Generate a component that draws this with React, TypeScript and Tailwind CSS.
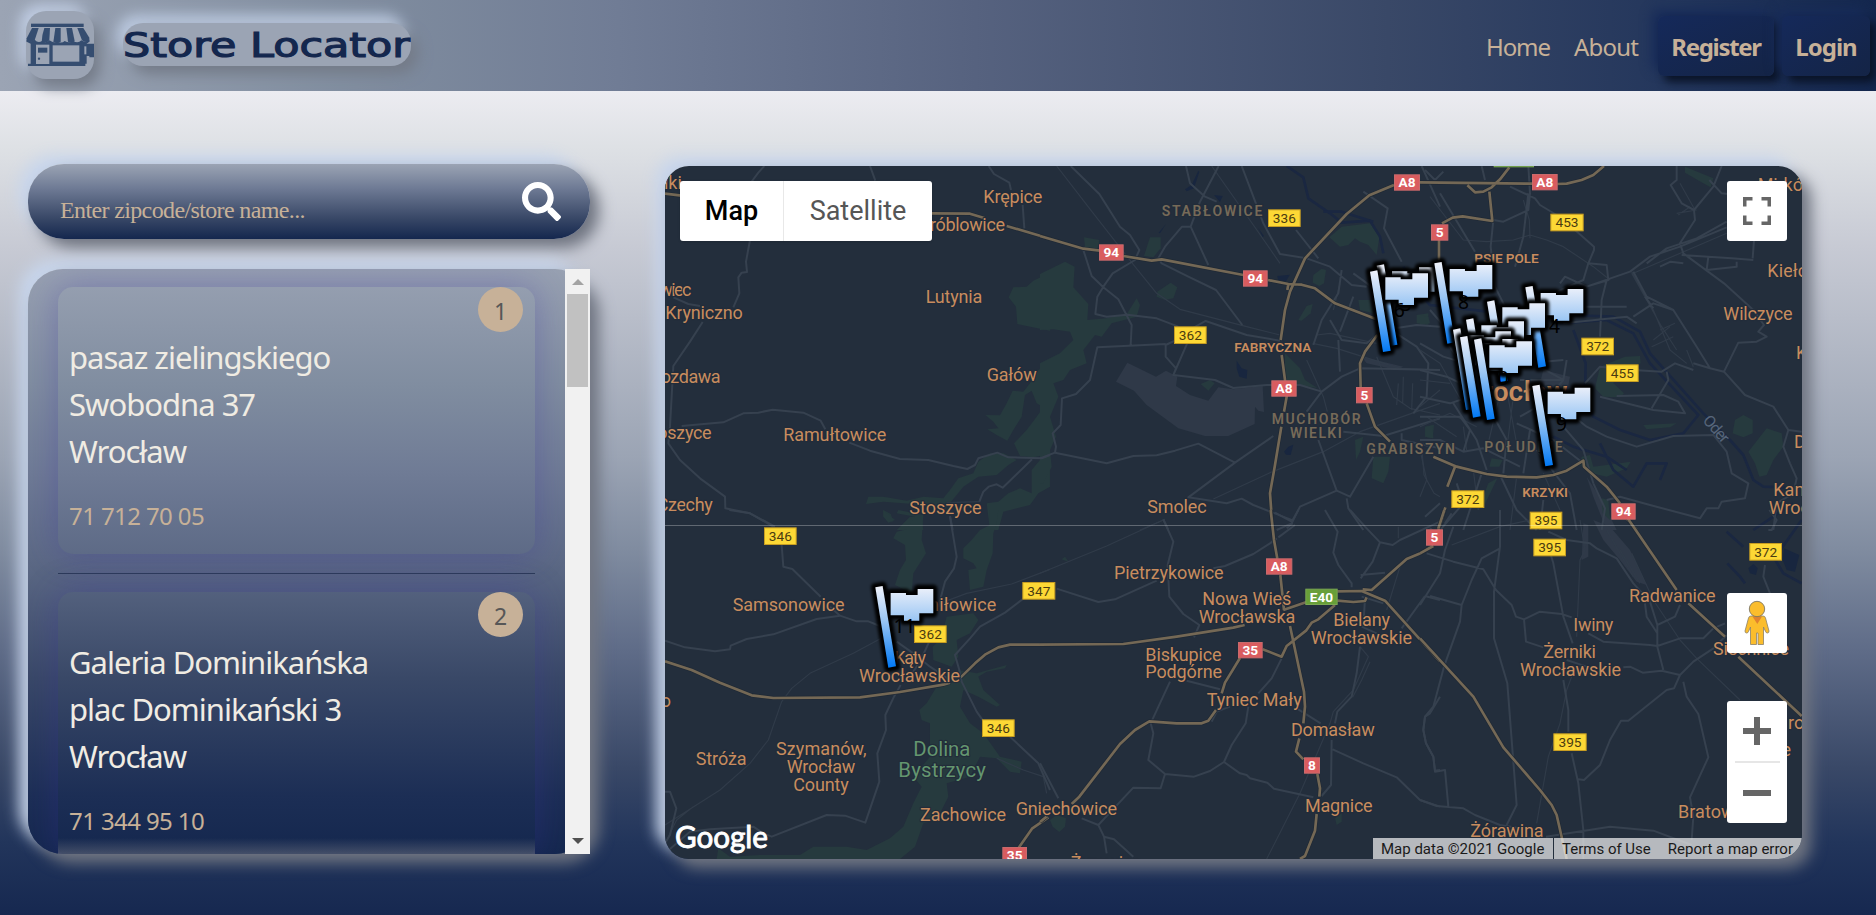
import React from "react";
import { FaSearch } from "react-icons/fa";

type Label = { t: string; x: number; y: number; w?: number; k?: "area" | "district" | "park" | "city" };
type Shield = { t: string; x: number; y: number; w: number; k: "y" | "r" | "g" };
type Tile = {
  x: number;
  y: number;
  woods: string[];
  water: string[];
  built: string[];
  thin: string[];
  minor: string[];
  major: string[];
  labels: Label[];
  shields: Shield[];
};

/* Tile content is drawn at three units per pixel. */
const tiles: Tile[] = [
  {
    x: 650,
    y: 150,
    woods: [
      "M1200 368L1150 392L1130 410L1090 412L1076 442L1098 470L1102 522L1130 528L1200 542Z",
      "M1200 640L1165 660L1140 700L1120 725L1088 722L1070 760L1050 796L1006 795L1030 815L1045 835L1012 838L1040 855L1072 872L1090 840L1115 800L1125 735L1145 722L1160 760L1180 772L1160 800L1130 840L1092 880L1110 918L1150 922L1200 912Z",
      "M1060 910L1020 910L985 935L970 970L925 985L900 1020L880 1045L820 1040L770 1052L700 1040L655 1040L648 1062L700 1055L790 1062L830 1070L885 1078L940 1010L985 980L1040 975L1075 945L1100 930Z",
      "M1170 930L1145 960L1145 1030L1110 1015L1075 1030L1045 1055L1010 1060L1020 1140L1045 1140L1060 1085L1140 1065L1165 1030L1200 1010L1200 920Z",
      "M700 1080L722 1092L730 1115L712 1112L700 1098Z",
      "M780 1100L815 1100L820 1140L740 1140Z",
    ],
    water: [],
    built: [],
    thin: ["M890 1058L990 1055"],
    minor: [
      "M343 48L325 68L304 96M300 270L288 335L291 366L275 368L265 382L268 430L250 472M158 516L120 575L70 648L60 830L55 880L90 930L150 985L225 1040L226 1075L300 1090L370 1130M70 442L115 462L150 468",
      "M95 828L220 817L280 790L325 788L368 779L460 788L512 812L526 838M598 878L660 902L750 927L835 930L910 948L952 957L975 945L985 925L1042 908L1075 922L1175 925L1200 915M1146 928L1058 1013L1040 1003L1016 1010L1000 1025L988 1055M900 1098L908 1140",
      "M660 48L676 92M1016 48L1032 72L1078 98L1083 120M1118 165L1123 235",
    ],
    major: ["M45 131L95 137M845 190L960 191L1005 205M1070 228L1200 266"],
    labels: [
      { t: "iki", x: 42, y: 118 },
      { t: "Krępice", x: 1000, y: 158, w: 177 },
      { t: "róblowice", x: 840, y: 244, w: 225 },
      { t: "wiec", x: 28, y: 437, w: 96 },
      { t: "Kryniczno", x: 46, y: 506, w: 232 },
      { t: "ozdawa", x: 32, y: 700, w: 180 },
      { t: "oszyce", x: 22, y: 867, w: 163 },
      { t: "Lutynia", x: 827, y: 458, w: 170 },
      { t: "Gałów", x: 1010, y: 692, w: 150 },
      { t: "Ramułtowice", x: 400, y: 874, w: 309 },
      { t: "Czechy", x: 20, y: 1082, w: 168 },
      { t: "Stoszyce", x: 778, y: 1092, w: 217 },
    ],
    shields: [],
  },
  {
    x: 1040,
    y: 150,
    woods: [
      "M0 372L75 335L104 350L100 412L145 462L142 510L200 505L262 490L290 445L300 465L290 500L215 520L185 560L165 555L130 600L140 640L90 660L70 690L40 700L55 740L30 800L48 860L30 900L35 950L10 1000L0 1000L0 640L60 610L100 570L90 545L40 538L0 540Z",
      "M132 262L178 270L172 300L135 292Z",
      "M330 262L362 262L362 295L340 322L312 318Z",
      "M352 425L392 398L412 412L400 445L375 450L350 440Z",
      "M868 262L905 230L990 220L1018 262L1010 315L985 285L960 275L945 265L925 285L900 290Z",
      "M820 375L845 356L858 360L852 400L838 408L818 398Z",
      "M735 610L780 655L795 690L832 714L770 705L735 690Z",
      "M482 702L510 690L524 700L505 722Z",
      "M945 870L970 860L960 905L948 930Z",
      "M1000 920L1050 920L1045 965L1030 1000L995 985Z",
      "M1155 830L1182 825L1178 865L1155 860Z",
      "M775 510L800 468L818 462L812 490L785 512Z",
      "M955 450L990 450L1000 490L960 480Z",
      "M1130 495L1165 490L1165 525L1130 520Z",
    ],
    water: [
      "M590 632L605 655L622 660L620 686L598 680L590 655Z",
      "M435 118L455 105L475 62L478 66L462 115L440 124Z",
      "M522 135L548 138L540 156Z",
      "M378 222L356 248L360 250Z",
      "M732 905L745 890L760 884L752 915L738 914Z",
      "M712 378L750 374L735 398L715 395Z",
      "M655 235L672 258L668 262Z",
    ],
    built: [
      "M262 638L348 680L378 662L412 680L408 708L450 735L505 752L535 712L580 718L668 708L672 786L655 782L645 770L644 822L565 858L495 858L415 835L368 800L320 765L282 722L228 695Z",
      "M965 620L1090 650L1070 660L980 640Z",
    ],
    thin: [
      "M50 48L160 190L285 350L350 430L420 478L620 530L720 555",
      "M515 48L640 225L720 340",
      "M520 1047L690 968L850 905L960 845L1200 760M300 1140L375 1108",
      "M818 580L890 595L1080 655L1200 660M830 555L870 550L1010 580M800 630L850 740L862 785",
      "M880 480L900 400M1075 700L1070 765M1090 680L1088 760M1118 700L1115 780",
      "M1145 890L1152 975L1182 1030L1200 1040",
      "M1010 620L1060 740L1110 775L1200 795",
    ],
    minor: [
      "M92 48L178 132L240 230L270 255L298 300L285 330L218 370L190 410L172 440L166 492L200 500L262 494L350 505L415 530",
      "M130 300L155 378L190 412L235 448L275 525L272 585M377 582L172 592L150 690L108 732L66 745L62 825L38 850L48 890L45 908L0 925",
      "M45 908L200 940L280 918L350 916L405 902L475 881L585 938L445 1042L560 1060L605 1046L640 1065L760 1112",
      "M445 542L497 513L620 555L720 572M452 556L400 675L525 690L580 714L680 705L780 705L845 725L800 785M400 675L408 655L377 620L377 585L430 560",
      "M438 48L450 100L495 140L530 155M536 48L480 155L452 230L426 230L375 290L355 325L365 340L445 380L528 420L607 525M452 230L505 345",
      "M605 48L640 140L670 220L720 312L800 325L870 350L935 405L980 410M768 240L835 325",
      "M1145 48L1200 170M970 125L1043 175L1032 235L1085 335",
      "M700 858L585 938M835 870L890 1022L930 1040L1000 920M890 1022L780 1070L755 1120L710 1140M845 725L905 680L960 655L1200 660M910 845L1030 858L1200 805M920 1045L925 1075L970 1140",
      "M905 360L895 430L845 510L820 585M940 370L995 410M940 440L900 545M870 510L905 570L980 580L1030 540L1130 525L1200 530M895 570L900 665",
      "M370 1108L385 1140M1085 850L1085 870L1200 895M1155 1100L1200 1060",
      "M1060 545L1130 590L1165 640L1160 740L1120 790",
    ],
    major: [
      "M0 258L130 296L180 302M250 318L335 332L365 328L610 375M684 390L745 402",
      "M1062 105L988 136L920 192L795 325L750 425L735 480L722 570M725 615L735 690L740 740L732 785M724 830L705 945L690 1030L698 1140",
      "M745 402L785 404L825 415L885 460L1010 508",
      "M1012 555L975 605L960 640L962 712M980 760L1005 830L1050 875",
      "M1140 97L1200 97M1197 268L1197 330M745 402L742 420",
    ],
    labels: [
      { t: "STABŁOWICE", x: 365, y: 197, w: 302, k: "area" },
      { t: "FABRYCZNA", x: 583, y: 606, w: 231, k: "district" },
      { t: "MUCHOBÓR", x: 695, y: 823, w: 267, k: "area" },
      { t: "WIELKI", x: 750, y: 865, w: 155, k: "area" },
      { t: "GRABISZYN", x: 979, y: 912, w: 266, k: "area" },
      { t: "Smolec", x: 322, y: 1090, w: 178 },
    ],
    shields: [
      { t: "336", x: 684, y: 178, w: 98, k: "y" },
      { t: "94", x: 177, y: 283, w: 74, k: "r" },
      { t: "94", x: 609, y: 361, w: 74, k: "r" },
      { t: "362", x: 402, y: 529, w: 98, k: "y" },
      { t: "A8", x: 694, y: 691, w: 76, k: "r" },
      { t: "A8", x: 1062, y: 73, w: 78, k: "r" },
      { t: "5", x: 948, y: 711, w: 50, k: "r" },
    ],
  },
  {
    x: 1420,
    y: 150,
    woods: [
      "M795 50L880 85L872 112L850 100L795 68Z",
      "M945 810L970 795L998 810L998 850L970 862L938 850Z",
      "M985 905L1040 835L1085 850L1090 890L1060 930L1040 975L1018 980L1005 940Z",
      "M540 650L615 620L660 618L662 640L600 660L580 700L612 730L600 742L550 740L525 715Z",
      "M485 920L510 915L520 950L632 935L620 955L560 980L515 970L480 945Z",
      "M670 825L770 820L750 832L680 838Z",
      "M205 1000L232 985L195 1062L190 1040Z",
      "M18 830L38 825L40 865L15 860Z",
      "M0 495L25 500L30 520L0 525Z",
      "M545 1045L565 1050L570 1110L548 1090Z",
      "M215 925L248 930L238 950L208 950Z",
    ],
    water: [],
    built: ["M500 980L520 1040L560 1140L590 1140L545 1050Z", "M370 660L450 680L440 730L360 700Z"],
    thin: [
      "M30 140L130 270L200 275L280 270L330 255L380 270L430 290L520 350L570 390M310 150L328 210L330 265",
      "M635 370L725 530L770 600M635 365L700 480L750 600L800 640M700 570L750 530M695 590L760 560M720 540L765 520M800 600L820 650",
      "M770 190L830 180M775 195L810 170M780 100L825 180M640 370L920 250",
      "M0 600L60 640L140 780M0 690L90 700M0 830L90 790L170 830M20 800L110 860M60 720L0 770M240 730L200 900M260 720L290 880M280 740L260 900M130 830L140 900",
      "M0 900L20 990L0 1040M160 960L175 1080M290 980L270 1140M370 970L420 1080",
    ],
    minor: [
      "M15 60L45 90L70 65M60 130L165 305M185 48L195 90M325 48L330 130L325 180L250 215L220 210L212 290L225 410L260 480M270 110L345 145L360 165L410 195M325 130L310 260L285 350",
      "M465 240L522 290L522 300L505 340L560 345L565 390L500 410L435 380L420 400M505 340L490 390L400 430M560 390L545 450L540 560",
      "M770 48L770 90L752 105L785 160L822 180L880 110L905 48M822 180L825 210L780 280L790 310L912 400L1000 480L1032 525L1015 545L1040 560L1010 575L955 578L912 665L870 655L820 640M868 90L905 130L925 132",
      "M920 232L780 290L690 320L630 365L500 410M920 215L830 265L740 295L680 340M785 315L865 320L935 325L1000 330M865 320L860 360L950 350L950 335M1002 272L998 325M720 350L752 335L790 340",
      "M640 365L680 440L760 480L830 590L870 655L912 665L975 735L1060 770L1105 840L1145 845M675 440L700 475M640 500L700 460L760 480M1105 840L1090 890L1110 940L1130 985L1120 1030L1070 1060L1060 1140",
      "M370 470L620 470M430 520L620 500L650 520M495 700L540 650L640 660L725 665L765 640L820 660M740 665L745 690L695 775M540 740L700 780L795 790L775 755L730 735L590 738",
      "M450 790L500 830L560 860L650 890L760 858L880 855L920 905L935 970L985 1000L975 1045L905 1055L895 1075L860 1075L840 1105L690 1065L600 1040L560 1050",
      "M0 580L70 620L170 650L320 640L430 630M70 560L150 680L210 760M0 660L80 680L230 750M30 480L100 560L160 580M0 740L90 760L210 720M300 690L430 690L370 760L300 800M340 640L430 690L440 630",
      "M0 800L120 800L150 840L130 905M100 760L170 870L200 960M210 780L260 870L250 970M330 840L310 970M290 820L400 870L490 940M0 870L60 870L130 905L190 895L300 950M110 1000L130 1060L60 1140M185 970L130 1140M240 975L290 1080L350 1140M370 1050L360 1140M520 1000L555 1075L545 1140",
      "M430 830L490 900L520 1000M350 900L450 1030L470 1140",
    ],
    major: [
      "M0 97L340 101M412 102L440 101L485 90L520 75L552 48M268 52L240 88L215 112L190 125L165 127L142 106M208 125L217 213L128 199L98 203L66 220M57 270L57 325",
      "M40 920L110 950L200 972L260 980L350 982L400 975L440 962L490 932L492 950L560 1010L600 1060M622 1108L650 1140M105 950L82 1010M76 1072L68 1100L55 1140",
    ],
    labels: [
      { t: "Mirków", x: 1013, y: 123, w: 176 },
      { t: "Kiełczów", x: 1042, y: 381, w: 218 },
      { t: "Wilczyce", x: 910, y: 511, w: 208 },
      { t: "K", x: 1128, y: 626 },
      { t: "PSIE POLE", x: 163, y: 340, w: 193, k: "district" },
      { t: "Wrocław", x: 116, y: 752, w: 326, k: "city" },
      { t: "D", x: 1122, y: 893 },
      { t: "Kam", x: 1060, y: 1038 },
      { t: "Wroc", x: 1046, y: 1092 },
      { t: "KRZYKI", x: 307, y: 1041, w: 137, k: "district" },
      { t: "POŁUDNIE", x: 193, y: 907, w: 235, k: "area" },
    ],
    shields: [
      { t: "A8", x: 336, y: 72, w: 77, k: "r" },
      { t: "5", x: 33, y: 223, w: 52, k: "r" },
      { t: "453", x: 391, y: 191, w: 100, k: "y" },
      { t: "372", x: 484, y: 563, w: 98, k: "y" },
      { t: "455", x: 558, y: 643, w: 98, k: "y" },
      { t: "372", x: 94, y: 1021, w: 99, k: "y" },
      { t: "395", x: 329, y: 1085, w: 98, k: "y" },
      { t: "94", x: 574, y: 1060, w: 73, k: "r" },
      { t: "", x: 221, y: 3, w: 121, k: "g" },
    ],
  },
  {
    x: 650,
    y: 510,
    woods: [
      "M745 0L820 15L815 90L828 130L790 190L785 250L735 225L750 180L768 150L765 105L730 85L740 65L770 58L795 20L740 10Z",
      "M700 0L735 30L715 38L700 20Z",
      "M1020 0L1045 0L1040 40L1030 70L1028 130L1010 180L1000 230L960 240L955 180L980 175L970 160L940 145L940 115L965 90L990 60L1020 45Z",
      "M890 320L970 310L985 330L960 370L920 390L925 440L905 470L850 450L848 410L880 380L885 340Z",
      "M860 530L905 520L925 480L980 490L1070 465L1065 475L1010 485L985 500L1000 540L1050 585L1040 590L985 560L940 540L930 590L960 640L1000 670L1050 740L1115 755L1110 790L1080 785L1040 745L990 740L960 800L890 820L895 860L860 930L820 940L795 1010L750 1047L200 1047L205 1015L240 1040L330 1035L450 1035L490 1010L590 1010L650 1020L720 985L760 950L790 880L815 830L790 800L840 740L840 640L815 630L808 600L830 580Z",
    ],
    water: [],
    built: [],
    thin: [
      "M730 365L610 430L480 490L425 535L395 575L355 690L300 760L210 840L45 945M45 1000L80 930L130 890",
      "M870 280L950 250L1085 222L1200 178M1040 745L1120 780L1180 800L1190 850",
    ],
    minor: [
      "M238 0L300 10L375 50M395 105L400 170L427 177L512 260M45 392L105 412L195 424L240 418L242 407L290 387L370 373L500 327L570 317L620 334L655 334L690 348M540 290L570 317M740 395L790 430L840 470L900 510",
      "M900 20L920 140L912 175L885 215L865 290M1117 268L1065 308L990 350L960 385L915 435L928 480L935 515L980 605L1005 640M840 390L810 455L770 515M1080 680L1165 760L1200 840",
      "M752 525L732 560L706 615L708 660L682 730L688 815L646 938L585 917L530 915L365 980L340 970L310 950L180 958L120 965L45 1030M45 845L60 845L79 895L60 975L45 1000",
    ],
    major: [
      "M45 454L125 480L210 518L305 556L370 564L630 562L750 546L880 524L900 518M932 502L975 460L1005 434L1045 412L1080 404L1200 404",
      "M1105 1015L1146 956L1195 922",
    ],
    labels: [
      { t: "Samsonowice", x: 248, y: 303, w: 336 },
      { t: "Gniłowice", x: 800, y: 303, w: 239 },
      { t: "Kąty", x: 733, y: 462, w: 95 },
      { t: "Wrocławskie", x: 627, y: 516, w: 303 },
      { t: "o", x: 32, y: 590 },
      { t: "Stróża", x: 137, y: 764, w: 153 },
      { t: "Szymanów,", x: 378, y: 735, w: 272 },
      { t: "Wrocław", x: 410, y: 788, w: 206 },
      { t: "County", x: 430, y: 842, w: 166 },
      { t: "Dolina", x: 790, y: 738, w: 171, k: "park" },
      { t: "Bystrzycy", x: 745, y: 801, w: 263, k: "park" },
      { t: "Zachowice", x: 810, y: 932, w: 258 },
      { t: "Gniechowice", x: 1097, y: 916, w: 304 },
    ],
    shields: [
      { t: "346", x: 342, y: 52, w: 98, k: "y" },
      { t: "362", x: 792, y: 346, w: 98, k: "y" },
      { t: "347", x: 1117, y: 216, w: 99, k: "y" },
      { t: "346", x: 996, y: 628, w: 98, k: "y" },
      { t: "35", x: 1057, y: 1011, w: 74, k: "r" },
    ],
  },
  {
    x: 1040,
    y: 510,
    woods: [
      "M30 930L50 915L78 925L75 950L58 966L38 950Z",
      "M885 925L905 910L905 935L890 945Z",
      "M65 148L75 140L85 155Z",
    ],
    water: [],
    built: [],
    thin: [
      "M0 190L200 108L375 28M960 410L985 440L940 540L880 605L870 640L780 850L680 1047M1080 170L1040 300M990 455L965 510L938 562M1075 50L1075 85",
    ],
    minor: [
      "M370 28L400 95L383 165L388 260L430 312L478 345L462 382M50 236L175 276L225 268L350 212M710 85L690 100L640 132L555 168L520 175M765 45L715 82M705 8L755 35L775 0M758 40L740 55",
      "M390 515L332 640L340 670L325 750L375 792L462 800L510 783L552 756L575 705L617 640L625 590M552 756L600 790L620 795L630 805L682 818L702 836L820 862M375 792L362 835L280 833L175 945L125 925M175 945L192 980L200 1030M192 980L222 988L280 1040M0 760L55 865M440 512L540 538M655 550L695 505L725 445",
      "M855 0L893 65L880 128L895 165L935 220L935 232M930 0L975 50L1020 97L1058 105L1080 90L1200 35M1020 97L998 155L962 205M962 195L1035 188M965 260L1030 280M975 265L970 350M960 410L950 490L935 560L892 605L885 640M875 690L873 825L845 858M878 718L970 760L1070 802L1140 870L1200 890M770 595L842 640M965 350L1010 370M1170 55L1200 80M1155 258L1200 270M1155 258L1085 355M1200 560L1170 610L1155 620L1150 660L1158 700L1180 740L1185 782L1200 780",
      "M515 635L530 605L570 590",
    ],
    major: [
      "M0 404L250 402L410 380L580 353L614 345M730 300L800 276M892 244L965 243L1035 272L1200 455M892 272L940 276L975 273L980 262M968 238L995 240L1100 147L1145 128L1175 108",
      "M692 0L702 90L712 146M721 195L732 300M750 348L792 545L795 590L790 640M778 685L768 725L790 748M832 792L840 835L838 860M830 912L825 962L795 1038L780 1047",
      "M885 285L835 328L815 338L798 362L740 408L725 440L668 418M600 444L555 518L545 550M528 600L505 632L485 640L410 640L328 634L285 660L240 702L118 860L95 882M20 920L0 936",
    ],
    labels: [
      { t: "Pietrzykowice", x: 222, y: 208, w: 329 },
      { t: "Nowa Wieś", x: 487, y: 285, w: 267 },
      { t: "Wrocławska", x: 476, y: 339, w: 290 },
      { t: "Bielany", x: 880, y: 347, w: 170 },
      { t: "Wrocławskie", x: 812, y: 402, w: 304 },
      { t: "Biskupice", x: 316, y: 452, w: 229 },
      { t: "Podgórne", x: 316, y: 505, w: 230 },
      { t: "Tyniec Mały", x: 500, y: 587, w: 285 },
      { t: "Domasław", x: 753, y: 679, w: 251 },
      { t: "Magnice", x: 795, y: 906, w: 203 },
      { t: "Żurawice", x: 92, y: 1078, w: 212 },
    ],
    shields: [
      { t: "A8", x: 678, y: 145, w: 79, k: "r" },
      { t: "E40", x: 796, y: 236, w: 97, k: "g" },
      { t: "35", x: 594, y: 396, w: 74, k: "r" },
      { t: "8", x: 792, y: 742, w: 48, k: "r" },
      { t: "5", x: 1158, y: 58, w: 51, k: "r" },
    ],
  },
  {
    x: 1420,
    y: 510,
    woods: [],
    water: [
      "M985 175L1000 162L1013 175L1008 195L990 190Z",
      "M1092 115L1138 135L1125 185L1100 180L1088 150Z",
    ],
    built: ["M520 30L570 50L630 120L680 225L650 215L600 150L550 90Z", "M490 40L505 45L505 140L485 150Z"],
    thin: [
      "M635 130L700 270L780 390L830 445L960 570M95 105L240 50L330 30M480 30L495 120L480 150L470 380",
      "M455 500L440 540L420 640L385 740L350 940M600 120L660 220M560 60L640 200",
    ],
    minor: [
      "M240 0L240 110L222 245L222 385L262 520L290 885L260 945M20 130L100 155L190 178L228 240L275 285L288 320L312 328L360 305L425 312L455 322M312 328L318 395L370 412M100 50L75 120L60 190L0 285M240 115L185 145L155 210L125 285L30 258M125 285L120 335L72 470L40 590L15 620L10 660L18 700L40 740L45 785L75 780L85 890M75 40L95 10",
      "M0 870L50 888L130 895L165 915L240 945L300 955M385 65L440 90L510 100L530 115L590 145L640 220L690 275L712 345L712 410L730 480M385 110L400 160L430 320L458 400M430 510L445 600L445 665M455 730L475 820L490 960L490 1047M505 370L550 395L690 405L712 408L780 385L850 385L880 355L915 340",
      "M610 472L630 470L668 488L725 482L780 495L762 535L740 540L625 632L603 632L570 690L540 765L492 810L475 808M780 495L820 455L880 415L920 375M790 515L800 560L835 612L865 742L810 862L820 920L815 990M378 980L570 950L700 962L815 1005",
      "M675 280L680 320L712 370M712 345L765 320L780 285M1035 165L1030 200L1050 250M1048 0L1070 30L1055 60L1045 60",
      "M440 450L500 470",
    ],
    major: [
      "M73 0L55 55M40 108L0 130M0 385L160 560L250 712L360 840L395 885L410 915L440 1047",
      "M625 28L770 240M805 280L915 380M955 440L1145 618",
    ],
    labels: [
      { t: "Radwanice", x: 627, y: 275, w: 260 },
      { t: "Iwiny", x: 460, y: 364, w: 120 },
      { t: "Żerniki", x: 370, y: 443, w: 158 },
      { t: "Wrocławskie", x: 300, y: 498, w: 303 },
      { t: "Siechnice", x: 879, y: 435, w: 228 },
      { t: "ro", x: 1104, y: 657 },
      { t: "ce", x: 1060, y: 737, w: 53 },
      { t: "Bratowice", x: 774, y: 925, w: 240 },
      { t: "Żórawina", x: 151, y: 982, w: 220 },
    ],
    shields: [
      { t: "395", x: 340, y: 86, w: 98, k: "y" },
      { t: "372", x: 988, y: 99, w: 98, k: "y" },
      { t: "395", x: 400, y: 670, w: 100, k: "y" },
    ],
  },
];

const rivers = [
  "M740 48L790 82L805 145L870 190L905 218L990 212L1020 260L1030 310",
  "M850 185L905 185L1000 215M1090 350L1130 420L1170 465L1390 490L1500 520L1570 495L1720 500L1800 545L1830 610L1990 790L2070 870L2110 915L2140 990L2170 1010L2240 1012",
  "M1560 520L1700 510L1780 550L1830 640L1975 795L1930 850L1830 870L1740 840L1660 800L1635 740L1637 640L1600 540",
  "M1680 880L1720 960L1780 1010L1820 940L1880 940L1860 990M1540 860L1600 890L1700 920L1760 960M2140 1140L2260 1060",
  "M2060 1145L2110 1190M2062 1240L2100 1280L2115 1300M2200 1220L2230 1270L2285 1300M2285 1110L2200 1230",
];

const flags = [
  { x: 1376.7, y: 265, n: "3" },
  { x: 1434.3, y: 262.7, n: "8" },
  { x: 1370, y: 271, n: "6" },
  { x: 1525.3, y: 286.7, n: "4" },
  { x: 1487, y: 301, n: "" },
  { x: 1466, y: 319, n: "" },
  { x: 1453, y: 329, n: "" },
  { x: 1460, y: 336.7, n: "" },
  { x: 1474, y: 339, n: "0" },
  { x: 1532.3, y: 385.3, n: "9" },
  { x: 875.3, y: 586.7, n: "11" },
];

const POLE = "M0 2L22 -2L62 239L39 243Z";
const CLOTH = "M46 19H92V25H127V7H174V80H132V102H86V86H46Z";

function Flag({ x, y, n }: { x: number; y: number; n: string }) {
  return (
    <g transform={`translate(${x} ${y}) scale(0.33333)`}>
      <g filter="url(#haze)" fill="#000" stroke="#000" strokeWidth="25" strokeLinejoin="round">
        <path d={POLE} />
        <path d={CLOTH} />
      </g>
      <g fill="url(#flag)">
        <path d={POLE} />
        <path d={CLOTH} />
      </g>
      <text x="88" y="138" fontSize="58" textAnchor="middle" fill="#000" fontFamily="'Noto Sans',sans-serif">
        {n}
      </text>
    </g>
  );
}

const at = (t: Tile) => `translate(${t.x} ${t.y}) scale(0.33333)`;

function MapLabel({ l }: { l: Label }) {
  const size = l.k === "area" ? 42 : l.k === "district" ? 41 : l.k === "park" ? 61 : l.k === "city" ? 84 : 54;
  const fill = l.k === "area" ? "#766a58" : l.k === "park" ? "#64966f" : "#c88c5e";
  return (
    <text
      x={l.x}
      y={l.y}
      fontSize={size}
      fontWeight={l.k === "area" || l.k === "district" || l.k === "city" ? 600 : 400}
      textLength={l.w}
      fill={fill}
      stroke="#222c3a"
      strokeWidth="7"
      strokeLinejoin="round"
      paintOrder="stroke"
    >
      {l.t}
    </text>
  );
}

function RoadShield({ s }: { s: Shield }) {
  const h = s.k === "y" ? 53 : 49;
  const bg = s.k === "y" ? "#fdd835" : s.k === "r" ? "#d95c5f" : "#689f38";
  const edge = s.k === "y" ? "#c79d22" : s.k === "r" ? "#c96a6c" : "#7aa753";
  return (
    <g>
      <rect x={s.x + 1.5} y={s.y + 1.5} width={s.w - 3} height={h - 3} fill={bg} stroke={edge} strokeWidth="3" />
      <text
        x={s.x + s.w / 2}
        y={s.y + h / 2 + 14.5}
        fontSize="41"
        fontWeight={s.k === "y" ? 400 : 700}
        textAnchor="middle"
        fill={s.k === "y" ? "#4a3c10" : "#fff"}
      >
        {s.t}
      </text>
    </g>
  );
}

function MapCanvas() {
  return (
    <svg className="block h-full w-full" viewBox="665 166 1137 693" fontFamily="Roboto, sans-serif">
      <defs>
        <linearGradient id="flag" gradientUnits="userSpaceOnUse" x1="0" y1="0" x2="0" y2="243">
          <stop offset="0" stopColor="#eef1fa" />
          <stop offset="0.42" stopColor="#9ac6f4" />
          <stop offset="1" stopColor="#0078f5" />
        </linearGradient>
        <filter id="haze" x="-30%" y="-30%" width="160%" height="160%">
          <feGaussianBlur stdDeviation="5" />
        </filter>
      </defs>
      <rect x="665" y="166" width="1137" height="693" fill="#232e3c" />
      {tiles.map((t, i) => (
        <g key={i} transform={at(t)}>
          {t.built.map((d) => (
            <path key={d} d={d} fill="#2f3948" />
          ))}
          {t.woods.map((d) => (
            <path key={d} d={d} fill="#263a3e" />
          ))}
          {t.water.map((d) => (
            <path key={d} d={d} fill="#18263f" />
          ))}
        </g>
      ))}
      <g transform="translate(1040 150) scale(0.33333)" fill="none" stroke="#1a2741" strokeWidth="8" strokeLinejoin="round">
        {rivers.map((d) => (
          <path key={d} d={d} />
        ))}
      </g>
      {tiles.map((t, i) => (
        <g key={i} transform={at(t)} fill="none" strokeLinejoin="round">
          <path d={t.thin.join("")} stroke="#303b49" strokeWidth="3.5" />
          <path d={t.minor.join("")} stroke="#36414f" strokeWidth="6" />
        </g>
      ))}
      {tiles.map((t, i) => (
        <g key={i} transform={at(t)} fill="none" strokeLinejoin="round">
          <path d={t.major.join("")} stroke="#1f2935" strokeWidth="12" />
          <path d={t.major.join("")} stroke="#746855" strokeWidth="8" />
        </g>
      ))}
      {tiles.map((t, i) => (
        <g key={i} transform={at(t)}>
          {t.labels.map((l) => (
            <MapLabel key={l.t + l.y} l={l} />
          ))}
          {t.shields.map((s) => (
            <RoadShield key={s.t + s.x} s={s} />
          ))}
        </g>
      ))}
      <text transform="translate(1702 421) rotate(48)" fontSize="16" textLength="31" fill="#56657a">
        Oder
      </text>
      <path d="M665 525.5H1802" stroke="#fff" strokeOpacity="0.28" />
      {flags.map((f) => (
        <Flag key={`${f.x}`} {...f} />
      ))}
    </svg>
  );
}

function StoreIcon() {
  return (
    <svg viewBox="0 0 204 204" className="block h-[68px] w-[68px]" fill="#354d70">
      <rect x="15" y="38" width="158" height="10" />
      <path d="M18 51H38L26 88Q18 96 2 92V82Z" />
      <path d="M55 51H72L70 88Q64 98 47 94Q48 70 55 51Z" />
      <path d="M88 51H104V92Q96 99 82 94Z" />
      <path d="M121 51H138L146 90Q138 98 126 92Z" />
      <path d="M154 51H172L190 80V92Q176 96 168 88Z" />
      <path d="M2 86Q14 96 26 86Q36 98 48 90Q60 98 70 88Q84 98 94 92Q108 98 116 90Q130 98 142 90Q156 98 166 88Q178 96 190 86V92L182 98V158H178V165H6V158H14V98L2 92Z" />
      <path d="M30 101H70V159H30Z" fill="#9ba4b4" />
      <path d="M80 103H160V152H80Z" fill="#9ba4b4" />
      <path d="M36 110H64V125H36Z" />
      <circle cx="39" cy="143" r="3.5" />
      <path d="M173 98H204V139H190V135H173Z" />
      <path d="M175 106H181V130H175Z" fill="#9ba4b4" />
    </svg>
  );
}

function Pegman() {
  return (
    <svg viewBox="0 0 26 46" className="h-[46px] w-[26px]">
      <path
        d="M7 16H19Q21 16 21.500 18L25 31Q25 33 23.500 33Q22 33 21.500 31.500L19.500 27V44.500H14V33H12.500V44.500H6.500V27L4.500 31.500Q4 33 2.500 33Q1 33 1 31L4.500 18Q5 16 7 16Z"
        fill="#fbbd2c"
        stroke="#8a8069"
        strokeWidth="0.8"
      />
      <path d="M8.500 16.500H18L13.300 24Z" fill="#e0822f" />
      <circle cx="13" cy="9" r="7.700" fill="#fbbd2c" stroke="#6f6b60" strokeWidth="0.8" />
    </svg>
  );
}

function StoreCard({ n, lines, phone }: { n: number; lines: string[]; phone: string }) {
  return (
    <article className="flex h-[267px] flex-col rounded-[15px] pl-[11px] pr-3 shadow-[0_0_34px_2px_rgba(58,50,160,0.32)]">
      <div className="flex justify-end">
        <span className="flex h-[45px] w-[45px] items-center justify-center rounded-full bg-[#c7b198] pt-[4px] text-[23px] leading-none text-[#575757]">
          {n}
        </span>
      </div>
      <div className="mt-[2px] text-[31px] leading-[47px] tracking-[-1px] text-[#f0ece3]">
        {lines.map((l) => (
          <p key={l}>{l}</p>
        ))}
      </div>
      <p className="mt-[24px] text-[24px] leading-[34px] tracking-[-0.6px] text-[#c7b198]">{phone}</p>
    </article>
  );
}

const SOFT = "shadow-[9px_9px_15px_#6f7480,-9px_-9px_15px_#c8d6ec]";
const NAV_BUTTON =
  "flex h-[60px] items-center rounded-md bg-gradient-to-br from-[#15295a] to-[#142446] pt-[2px] font-bold shadow-[6px_6px_9px_#0a1326,-6px_-6px_12px_#172b59]";

export default function App() {
  return (
    <div className="flex h-[915px] w-[1876px] flex-col overflow-hidden bg-[linear-gradient(180deg,#ececf1_10%,#dee1e5_16%,#c7cad4_27%,#9ba4b4_50%,#808ca0_60%,#5f6c88_71%,#394867_84%,#22355b_92%,#162850_100%)] font-['Noto_Sans','Open_Sans',sans-serif]">
      <header className="flex h-[91px] shrink-0 items-center justify-between bg-[linear-gradient(90deg,#9ba4b4_0%,#808d9f_19%,#707c95_33%,#56627f_52%,#394867_74%,#22355b_90%,#14274e_100%)] pl-[26px] pr-[6px]">
        <div className="flex items-center gap-[29px]">
          <div className="mb-[1px] h-[68px] w-[68px] rounded-[20px] bg-[#9ba4b4] shadow-[6px_8px_14px_#747b88,-6px_-6px_14px_#c4d1e7]">
            <StoreIcon />
          </div>
          <h1 className="mb-[2px] h-[43px] w-[288px] rounded-[20px] bg-[#9ba4b4] shadow-[7px_8px_14px_#747b88,-6px_-8px_14px_#bccae0]">
            <svg className="block h-[43px] w-[288px]" viewBox="0 0 288 43">
              <text
                x="0"
                y="33.500"
                fontSize="33"
                textLength="287"
                lengthAdjust="spacingAndGlyphs"
                fill="#14274e"
                stroke="#14274e"
                strokeWidth="1.2"
                fontFamily="'DejaVu Sans', sans-serif"
              >
                Store Locator
              </text>
            </svg>
          </h1>
        </div>
        <nav className="flex items-center text-[24px] text-[#c7b198]">
          <a className="mr-[23px] w-[65px] whitespace-nowrap pt-[2px] tracking-[-1.1px]">Home</a>
          <a className="mr-[19px] w-[65px] whitespace-nowrap pt-[2px] tracking-[-0.8px]">About</a>
          <a className={`${NAV_BUTTON} mr-[8px] w-[116px] justify-center tracking-[-1.3px]`}>Register</a>
          <a className={`${NAV_BUTTON} w-[88px] justify-center tracking-[-1px]`}>Login</a>
        </nav>
      </header>

      <main className="flex flex-1">
        <section className="ml-[28px] mt-[73px] w-[562px]">
          <form
            className={`flex h-[75px] items-center justify-between rounded-[36px] bg-[linear-gradient(180deg,#9ba4b4_0%,#6f7b95_32%,#394867_72%,#14274e_100%)] pl-[32px] pr-[29px] ${SOFT}`}
          >
            <span className="pt-[16px] font-['Liberation_Serif',serif] text-[24px] leading-none tracking-[-0.63px] text-[#c7b198]">
              Enter zipcode/store name...
            </span>
            <FaSearch className="mb-[1px] h-[39px] w-[39px] text-white" />
          </form>

          <div
            className={`relative mt-[30px] flex h-[585px] rounded-[35px] bg-[linear-gradient(180deg,#98a1b2_0%,#808da0_20%,#6f7b95_35%,#5c6985_50%,#394867_70%,#1c2e55_90%,#14274e_100%)] ${SOFT}`}
          >
            <div className="h-full w-[537px] overflow-hidden rounded-l-[35px] px-[30px] pt-[18px]">
              <StoreCard n={1} lines={["pasaz zielingskiego", "Swobodna 37", "Wrocław"]} phone="71 712 70 05" />
              <hr className="mb-[18px] mt-[19px] border-t border-[#2c3a58]" />
              <StoreCard n={2} lines={["Galeria Dominikańska", "plac Dominikański 3", "Wrocław"]} phone="71 344 95 10" />
            </div>
            <div className="flex h-full w-[25px] flex-col items-center justify-between bg-[#f1f1f1] pb-[10px] pt-[10px]">
              <div className="flex flex-col items-center gap-[9px]">
                <span className="h-0 w-0 border-x-[6px] border-b-[6px] border-x-transparent border-b-[#a3a3a3]" />
                <span className="h-[93px] w-[21px] bg-[#c1c1c1]" />
              </div>
              <span className="h-0 w-0 border-x-[6px] border-t-[6px] border-x-transparent border-t-[#505050]" />
            </div>
            <span className="absolute bottom-0 left-[30px] h-[16px] w-[477px] bg-gradient-to-t from-[#63697a] to-transparent opacity-60" />
          </div>
        </section>

        <section className={`relative ml-[75px] mt-[75px] h-[693px] w-[1137px] rounded-[24px] ${SOFT}`}>
          <div className="relative h-full w-full overflow-hidden rounded-[24px] font-[Roboto,sans-serif]">
            <MapCanvas />
            <div className="absolute left-[15px] top-[15px] flex h-[60px] items-center rounded-[3px] bg-white text-[27px] shadow">
              <button className="h-full w-[104px] border-r border-[#e8e8e8] font-medium text-black">Map</button>
              <button className="h-full w-[148px] text-[#565656]">Satellite</button>
            </div>
            <div className="absolute right-[15px] top-[15px] flex h-[60px] w-[60px] items-center justify-center rounded-[3px] bg-white">
              <svg viewBox="0 0 28 28" className="h-[28px] w-[28px]" fill="none" stroke="#666" strokeWidth="3.5">
                <path d="M1.750 9.500V1.750H9.500M18.500 1.750H26.250V9.500M26.250 18.500V26.250H18.500M9.500 26.250H1.750V18.500" />
              </svg>
            </div>
            <div className="absolute right-[15px] top-[427px] flex h-[60px] w-[60px] items-center justify-center rounded-[3px] bg-white">
              <Pegman />
            </div>
            <div className="absolute right-[15px] top-[535px] flex h-[122px] w-[60px] flex-col items-center rounded-[3px] bg-white">
              <svg viewBox="0 0 28 28" className="mt-[16px] h-[28px] w-[28px]" stroke="#666" strokeWidth="6">
                <path d="M0 14H28M14 0V28" />
              </svg>
              <span className="mt-[16px] h-[2px] w-[45px] bg-[#e6e6e6]" />
              <span className="mt-[27px] h-[6px] w-[28px] bg-[#666]" />
            </div>
            <svg className="absolute bottom-0 left-[9px] h-[40px] w-[100px]" viewBox="0 0 100 40">
              <text
                x="1"
                y="28.500"
                fontSize="30"
                fontWeight="400"
                textLength="93"
                lengthAdjust="spacingAndGlyphs"
                fill="#fff"
                stroke="#fff"
                strokeWidth="0.9"
                fontFamily="Lato, sans-serif"
              >
                Google
              </text>
            </svg>
            <div className="absolute bottom-0 right-0 flex h-[21px] text-[15px] leading-[22px] text-[#1a1a1a]">
              <span className="w-[180px] whitespace-nowrap bg-[#f5f5f5]/70 pl-[8px]">Map data ©2021 Google</span>
              <span className="ml-px flex w-[248px] justify-between whitespace-nowrap bg-[#f5f5f5]/70 pl-[8px] pr-[9px]">
                <span>Terms of Use</span>
                <span>Report a map error</span>
              </span>
            </div>
          </div>
        </section>
      </main>
    </div>
  );
}
